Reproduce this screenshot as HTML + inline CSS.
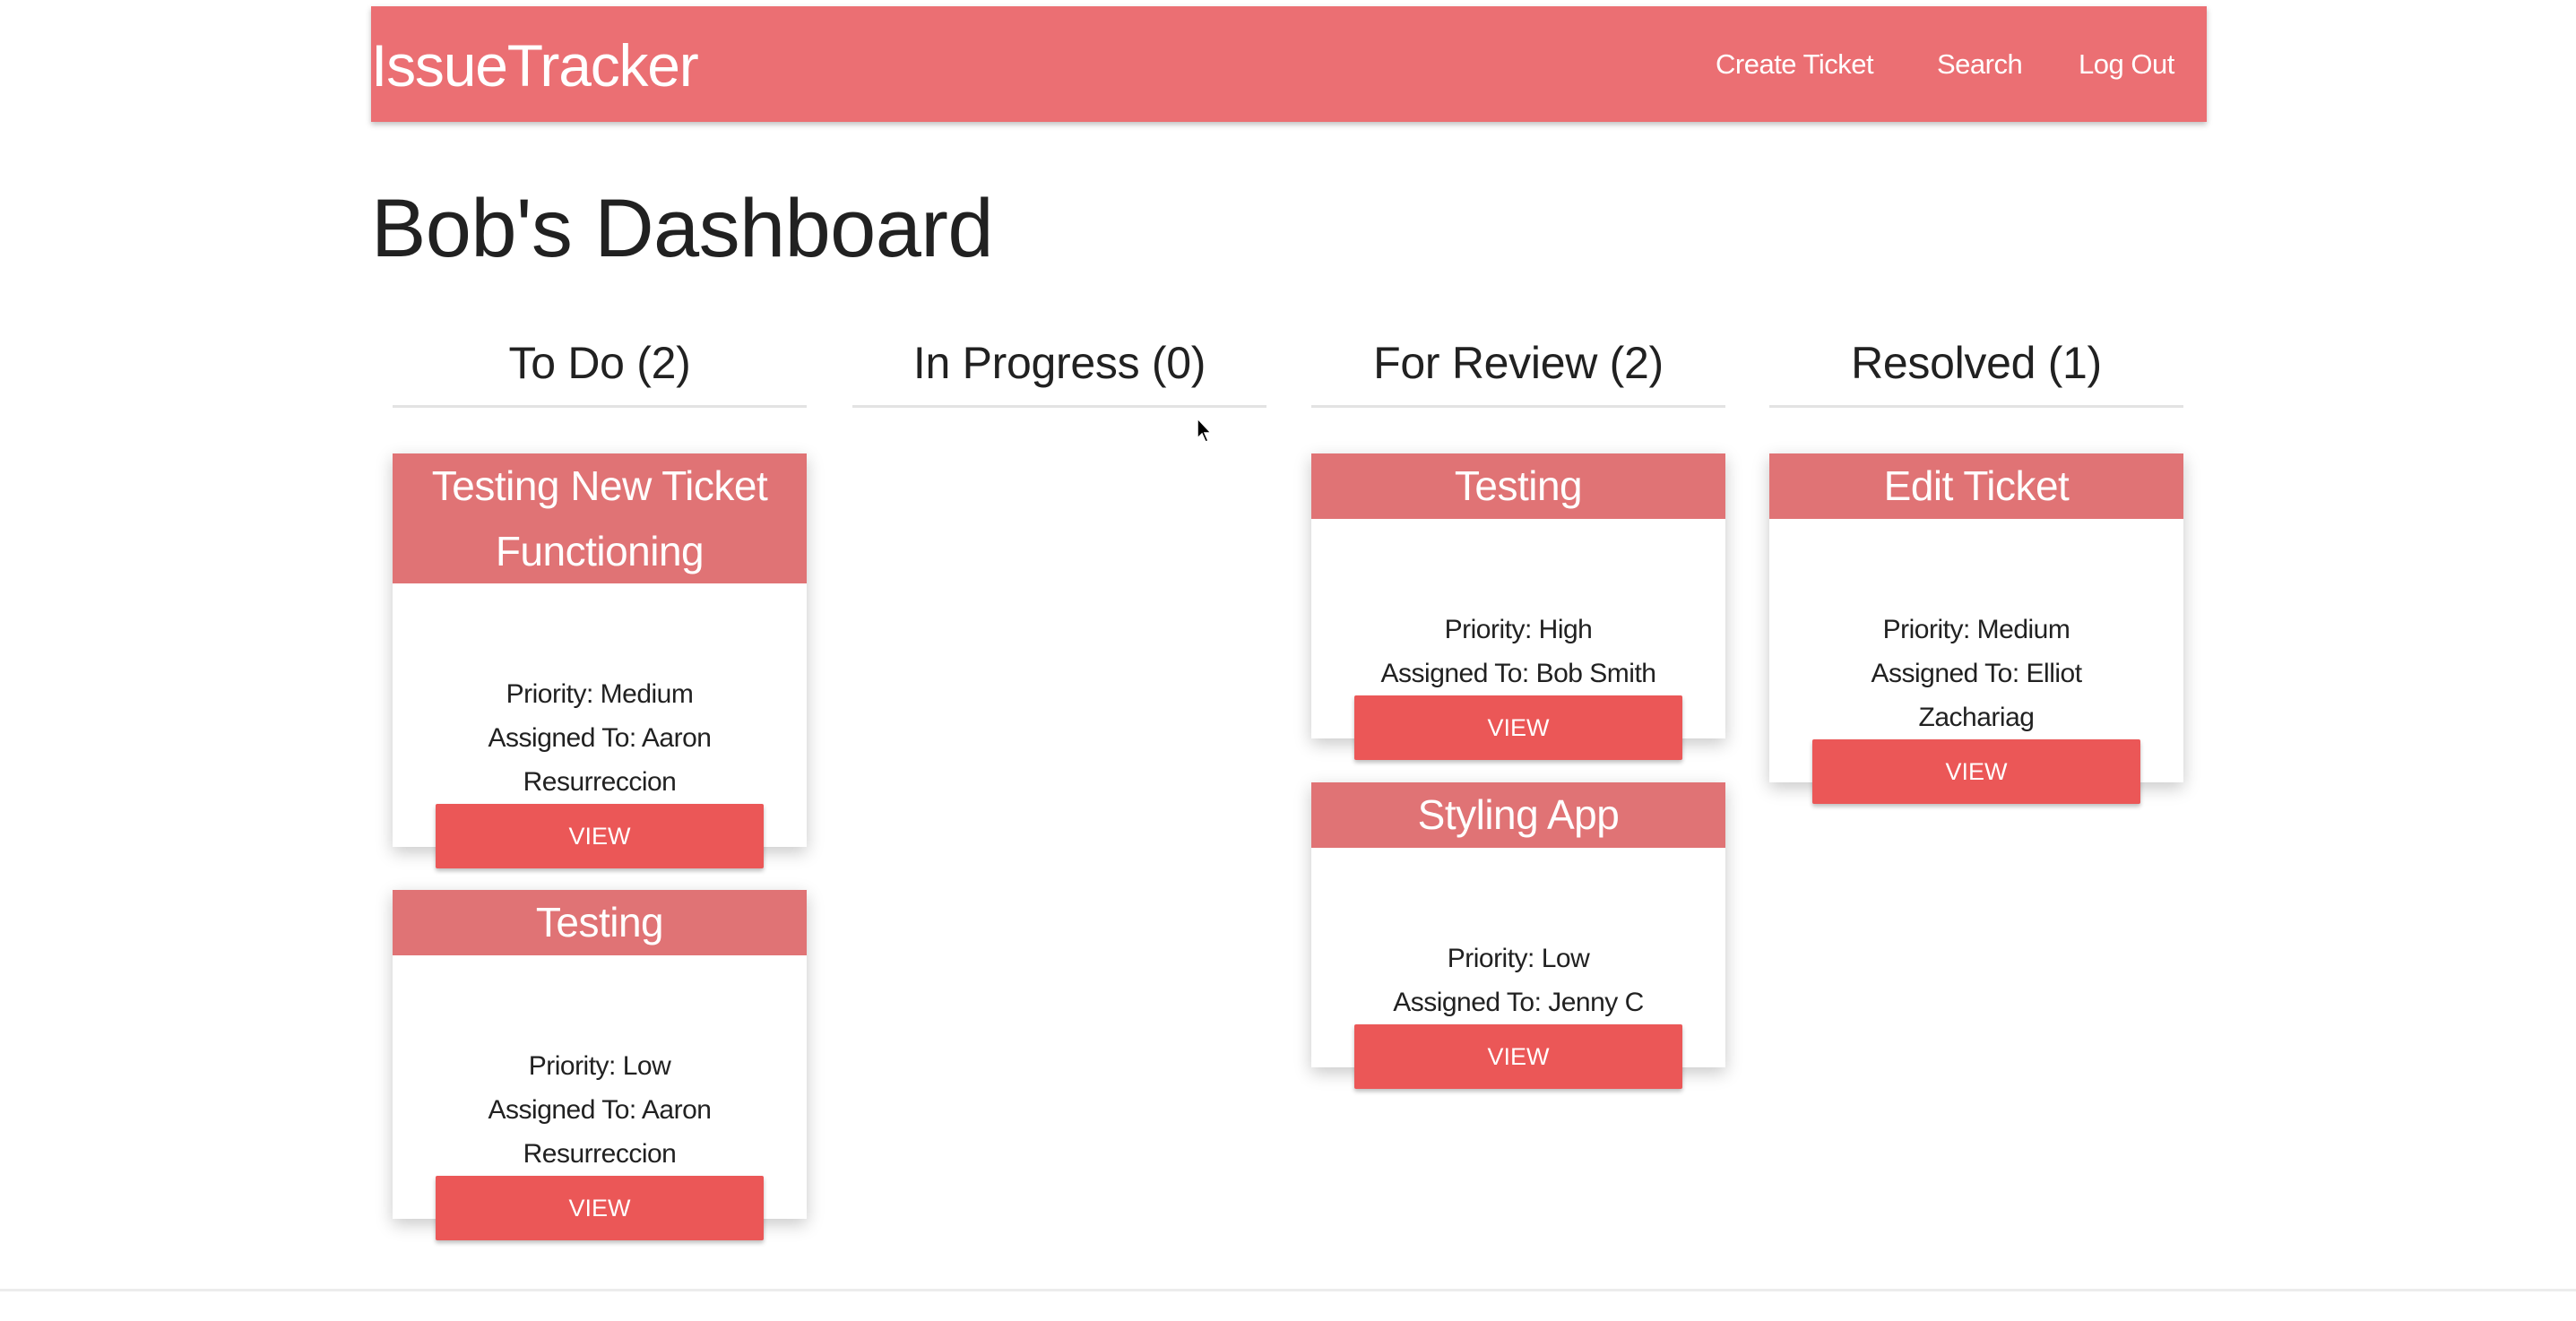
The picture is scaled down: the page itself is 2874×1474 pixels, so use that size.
<!DOCTYPE html>
<html><head><meta charset="utf-8"><style>
*{box-sizing:border-box;margin:0;padding:0}
body{width:2874px;height:1474px;background:#fff;font-family:"Liberation Sans",sans-serif;color:#212121;position:relative;overflow:hidden}
.nav{position:absolute;left:414px;top:7px;width:2048px;height:129px;background:#eb6f73;box-shadow:0 3px 6px rgba(0,0,0,.25)}
.brand{position:absolute;left:0;top:28px;font-size:66px;color:#fff;letter-spacing:-1.2px;line-height:76px}
.nl{position:absolute;top:47px;font-size:31px;color:#fff;line-height:36px;letter-spacing:-.5px}
h1{position:absolute;left:414px;top:200px;font-size:92px;font-weight:normal;line-height:110px;letter-spacing:-.6px}
.col{position:absolute;top:370px;width:462px}
.ch{height:85px;text-align:center;font-size:50px;line-height:70px;border-bottom:3px solid #e3e3e3;letter-spacing:-.3px}
.card{position:absolute;left:0;width:462px;background:#fff;box-shadow:0 6px 18px rgba(0,0,0,.22);text-align:center}
.card .t{background:#e07375;color:#fff;font-size:46px;line-height:72.5px;letter-spacing:-.5px}
.card .b{padding-top:99px}
.card p{font-size:30px;line-height:49px;letter-spacing:-.5px}
.btn{display:block;margin:0 auto -24px;width:366px;height:72px;background:#eb5757;color:#fff;font-size:27px;line-height:72px;box-shadow:0 3px 5px rgba(0,0,0,.25);border-radius:2px}
.foot{position:absolute;left:0;top:1438px;width:2874px;height:3px;background:#ececec}
</style></head><body>
<div class="nav"><div class="brand">IssueTracker</div>
<div class="nl" style="left:1500px">Create Ticket</div>
<div class="nl" style="left:1747px">Search</div>
<div class="nl" style="left:1905px">Log Out</div></div>
<h1>Bob's Dashboard</h1>

<div class="col" style="left:438px"><div class="ch">To Do (2)</div>
<div class="card" style="top:136px"><div class="t">Testing New Ticket<br>Functioning</div><div class="b"><p>Priority: Medium</p><p>Assigned To: Aaron<br>Resurreccion</p><div class="btn">VIEW</div></div></div>
<div class="card" style="top:623px"><div class="t">Testing</div><div class="b"><p>Priority: Low</p><p>Assigned To: Aaron<br>Resurreccion</p><div class="btn">VIEW</div></div></div>
</div>

<div class="col" style="left:951px"><div class="ch">In Progress (0)</div></div>

<div class="col" style="left:1463px"><div class="ch">For Review (2)</div>
<div class="card" style="top:136px"><div class="t">Testing</div><div class="b"><p>Priority: High</p><p>Assigned To: Bob Smith</p><div class="btn">VIEW</div></div></div>
<div class="card" style="top:503px"><div class="t">Styling App</div><div class="b"><p>Priority: Low</p><p>Assigned To: Jenny C</p><div class="btn">VIEW</div></div></div>
</div>

<div class="col" style="left:1974px"><div class="ch">Resolved (1)</div>
<div class="card" style="top:136px"><div class="t">Edit Ticket</div><div class="b"><p>Priority: Medium</p><p>Assigned To: Elliot<br>Zachariag</p><div class="btn">VIEW</div></div></div>
</div>

<svg style="position:absolute;left:1335px;top:466px" width="20" height="30" viewBox="0 0 20 30"><path d="M1 1 L1 23 L6 18 L10 27 L13 26 L9 17 L16 17 Z" fill="#000" stroke="#fff" stroke-width="1.5"/></svg>
<div class="foot"></div>
</body></html>
